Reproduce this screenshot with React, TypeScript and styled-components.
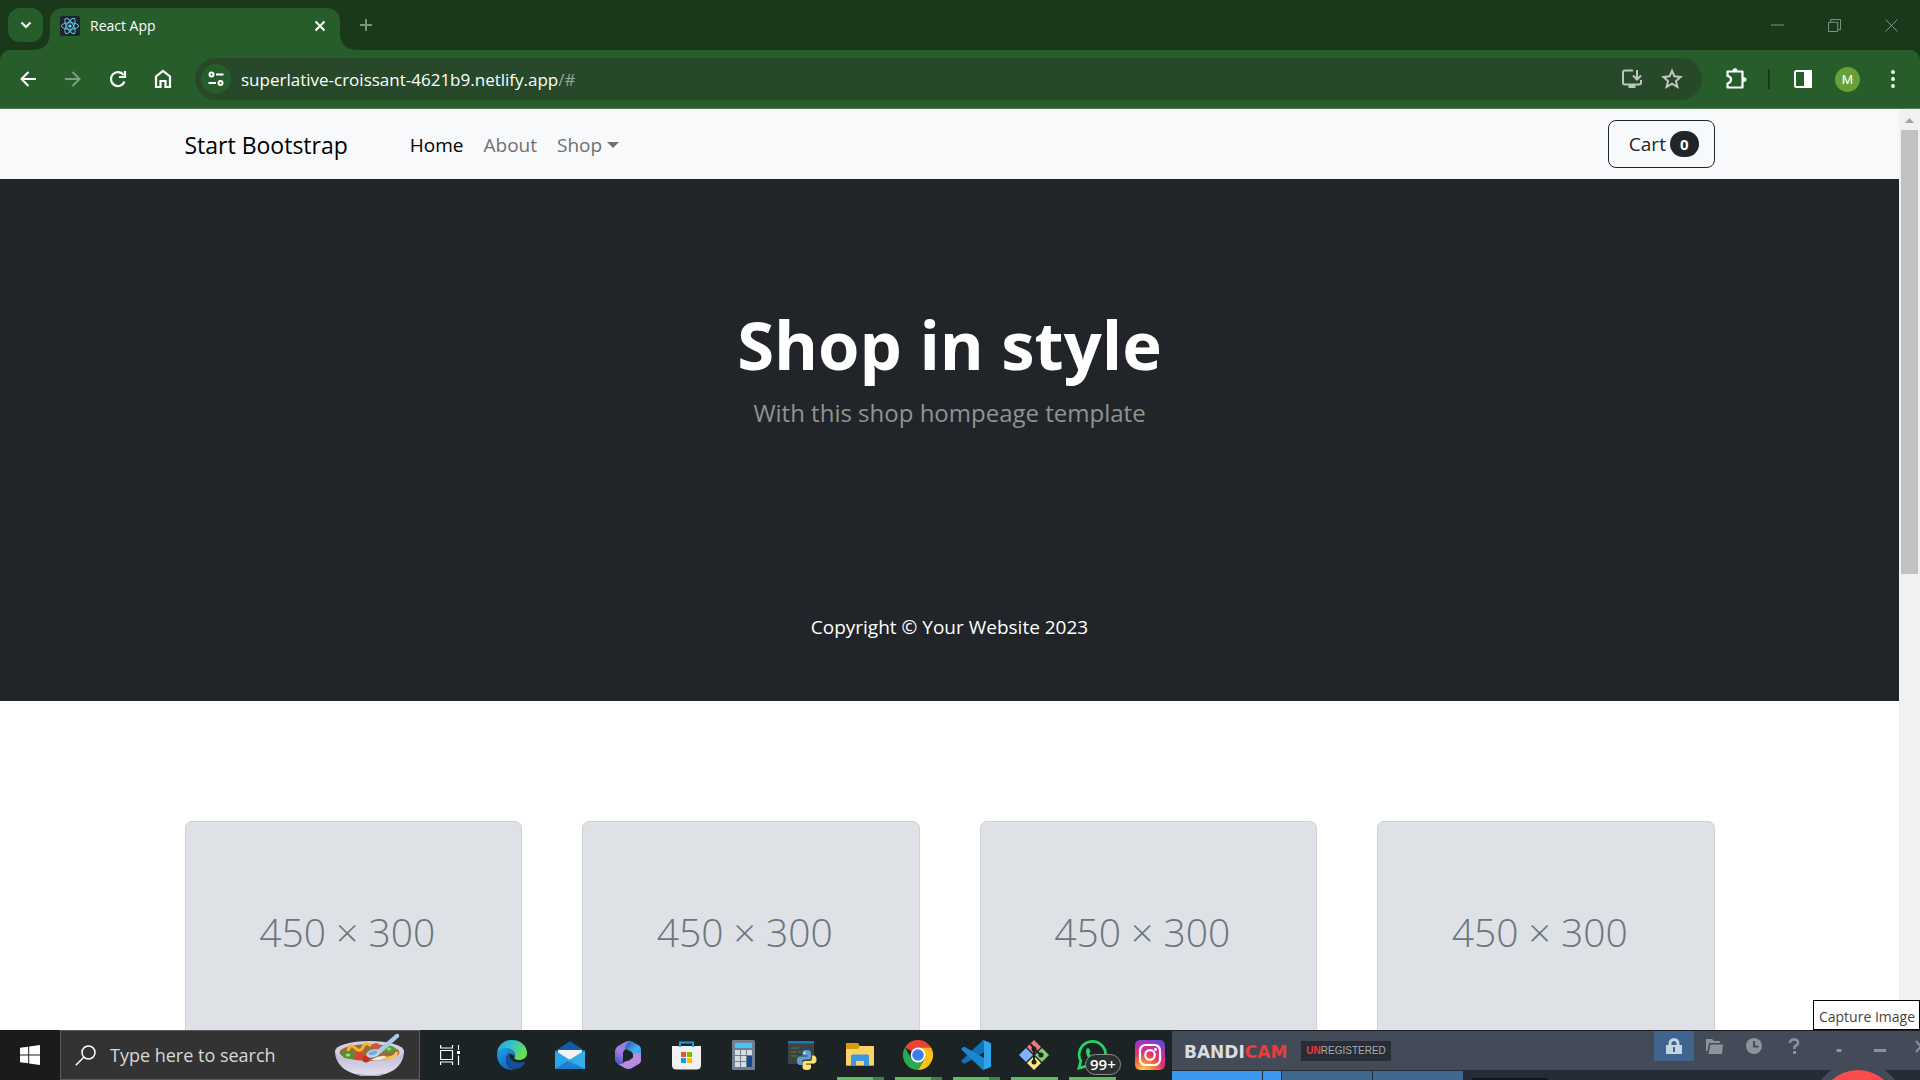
import React from "react";
import styled, { createGlobalStyle } from "styled-components";

const GlobalStyle = createGlobalStyle`
  *, *::before, *::after { box-sizing: border-box; }
  html, body, #root { height: 100%; }
  body { margin: 0; overflow: hidden; font-family: "Open Sans", "Noto Sans", sans-serif; }
  button, input { font: inherit; }
  button { padding: 0; border: 0; background: none; cursor: pointer; }
  a { color: inherit; text-decoration: none; }
  svg { display: block; flex: none; }
`;

const Desktop = styled.div`
  height: 100vh;
  display: flex;
  flex-direction: column;
  background: #fff;
`;

/* ---------- Browser chrome ---------- */

const TabStrip = styled.div`
  flex: none;
  height: 50px;
  display: flex;
  align-items: flex-end;
  background: #1a391b;
  color: #fff;
`;

const TabSearch = styled.button`
  width: 35px;
  height: 34px;
  margin: 0 7px 8px 8px;
  border-radius: 12px;
  background: #265d2b;
  display: grid;
  place-items: center;
`;

const Tab = styled.div`
  position: relative;
  width: 290px;
  height: 42px;
  padding: 0 10px 7px;
  display: flex;
  align-items: center;
  gap: 10px;
  border-radius: 13px 13px 0 0;
  background: #265d2b;
  font-size: 14px;
  line-height: 20px;

  &::before,
  &::after {
    content: "";
    position: absolute;
    bottom: 0;
    width: 14px;
    height: 14px;
  }
  &::before {
    right: 100%;
    background: radial-gradient(circle at 0 0, transparent 13px, #265d2b 14px);
  }
  &::after {
    left: 100%;
    background: radial-gradient(circle at 100% 0, transparent 13px, #265d2b 14px);
  }
`;

const TabTitle = styled.span`
  flex: 1;
`;

const IconButton = styled.button<{ $w?: number; $h?: number }>`
  flex: none;
  width: ${(p) => p.$w ?? 45}px;
  height: ${(p) => p.$h ?? 42}px;
  display: grid;
  place-items: center;
`;

const WindowControls = styled.div`
  margin-left: auto;
  display: flex;
`;

const ToolbarBack = styled.div`
  flex: none;
  background: #1a391b;
`;

const Toolbar = styled.div`
  height: 59px;
  padding: 0 5px;
  display: flex;
  align-items: center;
  border-bottom: 1px solid #4f7f53;
  border-radius: 10px 10px 0 0;
  background: #265d2b;
`;

const Omnibox = styled.form`
  flex: 1;
  height: 42px;
  margin: 0 11px 0 10px;
  padding: 0 10px 0 6px;
  display: flex;
  align-items: center;
  border-radius: 21px;
  background: #27492a;
  color: #fff;
  font-size: 17px;
`;

const SiteInfo = styled.button`
  width: 30px;
  height: 30px;
  margin-right: 10px;
  border-radius: 50%;
  background: #265d2b;
  display: grid;
  place-items: center;
`;

const UrlInput = styled.input`
  field-sizing: content;
  padding: 0;
  border: 0;
  outline: 0;
  background: none;
  color: #fff;
`;

const UrlRest = styled.span`
  flex: 1;
  color: #98a899;
`;

const ToolbarDivider = styled.span`
  width: 2px;
  height: 20px;
  margin: 0 10px;
  background: #1a391b;
`;

const Avatar = styled.span`
  width: 25px;
  height: 25px;
  border-radius: 50%;
  display: grid;
  place-items: center;
  background: #689f38;
  color: #fff;
  font: 13px/25px Roboto, sans-serif;
`;

/* ---------- Web page ---------- */

const Viewport = styled.div`
  flex: 1;
  min-height: 0;
  display: flex;
  position: relative;
`;

const Page = styled.div`
  flex: 1;
  overflow: hidden;
  background: #fff;
  color: #212529;
  font-size: 19px;
  line-height: 30px;
`;

const Container = styled.div`
  width: 100%;
  max-width: 1650px;
  margin: 0 auto;
  padding: 0 60px;
`;

const Navbar = styled.nav`
  padding: 10px 0;
  background: #f8f9fb;
`;

const NavRow = styled(Container)`
  height: 50px;
  display: flex;
  align-items: center;
`;

const Brand = styled.a`
  margin-right: 52px;
  padding-top: 2px;
  color: #000;
  font-size: 23px;
`;

const NavList = styled.ul`
  flex: 1;
  margin: 0;
  padding: 0;
  display: flex;
  list-style: none;
`;

const NavLink = styled.a<{ $active?: boolean }>`
  padding: 11px 10px 9px;
  display: flex;
  align-items: center;
  gap: 5px;
  color: ${(p) => (p.$active ? "#000" : "#6f7071")};
`;

const Caret = styled.span`
  border: 6px solid transparent;
  border-top-color: currentColor;
  border-bottom: 0;
`;

const CartButton = styled.button`
  height: 48px;
  padding: 0 15px 0 20px;
  display: flex;
  align-items: center;
  gap: 4px;
  border: 1px solid #212529;
  border-radius: 8px;
  color: #212529;
`;

const Badge = styled.span`
  padding: 0 10px;
  border-radius: 13px;
  background: #212529;
  color: #fff;
  font-size: 15px;
  font-weight: 700;
  line-height: 26px;
`;

const Hero = styled.header`
  padding: 123px 0 120px;
  background: #212529;
  text-align: center;
`;

const HeroTitle = styled.h1`
  margin: 0 0 8px;
  color: #fff;
  font-size: 67px;
  font-weight: 700;
  line-height: 84px;
`;

const Lead = styled.p`
  margin: 0;
  color: #909294;
  font-size: 24px;
  line-height: 38px;
`;

const Footer = styled.footer`
  padding: 60px 0 59px;
  background: #212529;
  color: #fff;
  text-align: center;

  p { margin: 0; }
`;

const Products = styled.section`
  padding: 120px 0;
`;

const ProductGrid = styled.div`
  display: grid;
  grid-template-columns: repeat(4, 1fr);
  gap: 60px;
`;

const Card = styled.article`
  border: 1px solid #cfd2d6;
  border-radius: 7px;
  overflow: hidden;
  background: #dee1e6;
`;

const CardImage = styled.div`
  aspect-ratio: 3 / 2;
  padding: 0 12px 4px 0;
  display: grid;
  place-items: center;
  color: #6c757d;
  font-size: 39px;
  font-weight: 300;
  line-height: 50px;
`;

const ScrollTrack = styled.div`
  flex: none;
  width: 21px;
  padding: 0 2px;
  display: flex;
  flex-direction: column;
  background: #f1f1f1;
`;

const ScrollThumb = styled.div`
  flex: 0 0 48.2%;
  background: #c1c1c1;
`;

const Tooltip = styled.div`
  position: absolute;
  right: 0;
  bottom: 0;
  height: 30px;
  padding: 2px 4px 0 5px;
  border: 1px solid #000;
  background: #fff;
  color: #444;
  font-size: 14px;
  line-height: 28px;
`;

/* ---------- Taskbar ---------- */

const Taskbar = styled.div`
  flex: none;
  height: 50px;
  display: flex;
  background: #1b2324;
`;

const StartButton = styled.button`
  width: 60px;
  background: #1b1b1b;
  display: grid;
  place-items: center;
`;

const SearchBox = styled.label`
  width: 360px;
  padding: 0 14px;
  display: flex;
  align-items: center;
  gap: 14px;
  border: 1px solid #5c5c5c;
  background: #333;
`;

const SearchInput = styled.input`
  flex: 1;
  min-width: 0;
  padding: 0;
  border: 0;
  outline: 0;
  background: none;
  color: #fff;
  font-size: 18px;

  &::placeholder { color: #d8d8d8; opacity: 1; }
`;

const TaskView = styled.button`
  width: 60px;
  margin-right: 3px;
  display: grid;
  place-items: center;
`;

const TaskButton = styled.button`
  position: relative;
  width: 58px;
  height: 50px;
  display: grid;
  place-items: center;
`;

const OpenMark = styled.span<{ $stacked: boolean }>`
  position: absolute;
  bottom: 0;
  left: 6px;
  right: 5px;
  height: 3px;
  background: ${(p) =>
    p.$stacked ? "linear-gradient(90deg, #64b967 36px, #44804a 36px)" : "#64b967"};
`;

const Unread = styled.span`
  position: absolute;
  top: 24px;
  left: 22px;
  height: 21px;
  padding: 0 4px;
  border: 1px solid #8b8f8f;
  border-radius: 11px;
  background: #2b3030;
  color: #fff;
  font-size: 15px;
  font-weight: 600;
  line-height: 19px;
`;

const Recorder = styled.div`
  flex: 1;
  display: flex;
  flex-direction: column;
  position: relative;
  overflow: hidden;
  margin-left: -7px;
  border-top: 1px solid #1c2026;
  background: #262c35;
`;

const RecorderBar = styled.div`
  height: 39px;
  padding-left: 12px;
  display: flex;
  align-items: center;
  background: #424b57;
`;

const RecorderLogo = styled.span`
  padding-top: 2px;
  font: bold 17px/20px "DejaVu Sans", sans-serif;
  color: #dcdde0;

  b { color: #ee3b3b; }
`;

const License = styled.span`
  margin-left: 14px;
  padding: 0 5px;
  background: #272d34;
  color: #a9adb1;
  font: 10px/20px "Liberation Sans", sans-serif;

  b { color: #ee3b3b; }
`;

const RecorderTools = styled.div`
  height: 39px;
  margin-left: auto;
  display: flex;
  align-items: flex-start;
`;

const Tool = styled.button<{ $on?: boolean; $w: number }>`
  width: ${(p) => p.$w}px;
  height: 30px;
  display: grid;
  place-items: center;
  overflow: hidden;
  background: ${(p) => (p.$on ? "#3f658e" : "none")};
`;

const Segments = styled.div`
  flex: 1;
  display: flex;
  gap: 1px;
  padding-top: 1px;
`;

const Segment = styled.span<{ $w: number; $on?: boolean }>`
  width: ${(p) => p.$w}px;
  background: ${(p) => (p.$on ? "#3b98f0" : "#40688f")};
`;

const Preview = styled.span`
  width: 76px;
  height: 2px;
  margin-left: 8px;
  align-self: flex-end;
  background: #11151d;
`;

const RecordDial = styled.svg`
  position: absolute;
  right: 12px;
  bottom: 0;
`;

/* ---------- Icons ---------- */

const Ico = ({ s = 20, vb = 24, children, ...rest }: any) => (
  <svg width={s} height={s} viewBox={`0 0 ${vb} ${vb}`} fill="none" aria-hidden="true" {...rest}>
    {children}
  </svg>
);

const ReactIcon = () => (
  <Ico s={20} vb={20}>
    <rect width="20" height="20" rx="2" fill="#20232a" />
    <g stroke="#5bc4e4" strokeWidth="1">
      <ellipse cx="10" cy="10" rx="8.6" ry="3.3" />
      <ellipse cx="10" cy="10" rx="8.6" ry="3.3" transform="rotate(60 10 10)" />
      <ellipse cx="10" cy="10" rx="8.6" ry="3.3" transform="rotate(120 10 10)" />
    </g>
    <circle cx="10" cy="10" r="1.6" fill="#61dafb" />
  </Ico>
);

const WindowsIcon = () => (
  <Ico s={20} vb={20} fill="#fff">
    <path d="M0 2.8 8.2 1.7V9.5H0zM9.2 1.5 20 0V9.5H9.2zM0 10.5H8.2V18.3L0 17.2zM9.2 10.5H20V20L9.2 18.5z" />
  </Ico>
);

const BowlIcon = () => (
  <svg width="70" height="44" viewBox="0 0 70 44" aria-hidden="true">
    <defs>
      <linearGradient id="bowl" x1="0" y1="0" x2="0" y2="1">
        <stop offset="0" stopColor="#b9b4d2" />
        <stop offset="1" stopColor="#e6e2f0" />
      </linearGradient>
    </defs>
    <path d="M0 18C0 33 14 43 35 43S69 33 69 18z" fill="url(#bowl)" />
    <path d="M21 40Q35 44 49 40L45 43H25z" fill="#b7b0cf" />
    <ellipse cx="34.5" cy="18" rx="34.5" ry="10" fill="#d3d0e6" />
    <ellipse cx="34.5" cy="19.5" rx="30" ry="8.5" fill="#9a6a3c" />
    <path d="M13 18Q15 10 20 15T28 14T36 13" stroke="#f5b427" strokeWidth="3" fill="none" />
    <ellipse cx="13" cy="22" rx="6" ry="3.5" fill="#3f9b2f" />
    <ellipse cx="54" cy="16" rx="6" ry="3.5" fill="#4aa32f" />
    <ellipse cx="13" cy="22" rx="2.5" ry="1.5" fill="#a8d56c" />
    <ellipse cx="54" cy="16" rx="2" ry="1.4" fill="#a8d56c" />
    <path d="M48 25Q60 26 62 19" stroke="#f3c553" strokeWidth="3" fill="none" />
    <circle cx="24" cy="23" r="4" fill="#e0402f" />
    <circle cx="31" cy="26" r="3.6" fill="#c92e25" />
    <circle cx="41" cy="13" r="3" fill="#df5137" />
    <path d="M36 27Q45 22 51 23Q48 29 36 27z" fill="#f5e6d6" />
    <path d="M40 19 61 1Q65 0 64 4L45 21z" fill="#a9c8ee" />
    <ellipse cx="38" cy="20.5" rx="7" ry="4" fill="#b9d4f2" transform="rotate(-15 38 20)" />
    <ellipse cx="38" cy="20" rx="4.5" ry="2" fill="#7ba7d9" transform="rotate(-15 38 20)" />
  </svg>
);

const EdgeIcon = () => (
  <Ico s={30} vb={30}>
    <defs>
      <linearGradient id="edgeTop" x1="0" y1="0" x2="1" y2="0.5">
        <stop offset="0" stopColor="#1f9fe0" />
        <stop offset="0.5" stopColor="#35c4c9" />
        <stop offset="1" stopColor="#66e04c" />
      </linearGradient>
      <linearGradient id="edgeLow" x1="0" y1="0" x2="0.6" y2="1">
        <stop offset="0" stopColor="#1ea4ea" />
        <stop offset="1" stopColor="#1263b8" />
      </linearGradient>
    </defs>
    <path d="M0 13C1 5 7 0 15 0C24 0 30 6 30 13C30 18 26 20 22 20C18 20 17 18.5 17.5 17.5C19 15.5 18 11 13 9C8 7.5 2 9 0 13z" fill="url(#edgeTop)" />
    <path d="M0 14C1 9 7 7 12 8.5C16 9.5 18.500 13 17.500 17C15 11.5 9 14 9 20C9 25 13 29 18 29.7C8 31.5 0 25 0 14z" fill="url(#edgeLow)" />
    <path d="M12.5 12.5C8 15 8 22 11.5 26C16 31 25 29.5 28 23C28.5 22 27.5 21.5 26.5 22C18 25 11 19 12.5 12.5z" fill="#134f9c" />
  </Ico>
);

const MailIcon = () => (
  <Ico s={30} vb={30}>
    <path d="M0 11 15 1 30 11V14H0z" fill="#0f5ba8" />
    <path d="M3 10H27V22H3z" fill="#f3f3f3" />
    <path d="M0 10.5 15 20 30 10.5V29H0z" fill="#29a7ea" />
    <path d="M30 10.5 0 29H30z" fill="#2f9fe6" />
    <path d="M15 19.5 0 29H30z" fill="#1b7fd0" />
    <path d="M30 10.5 12 21 30 29z" fill="#39b7ef" opacity=".6" />
  </Ico>
);

const M365Icon = () => (
  <Ico s={30} vb={30}>
    <defs>
      <linearGradient id="m365a" x1="0.6" y1="0" x2="0.2" y2="1">
        <stop offset="0" stopColor="#8f7be6" />
        <stop offset="0.5" stopColor="#a97be0" />
        <stop offset="1" stopColor="#3c56c4" />
      </linearGradient>
      <linearGradient id="m365b" x1="0" y1="0" x2="1" y2="1">
        <stop offset="0" stopColor="#2c4fae" />
        <stop offset="0.6" stopColor="#42b4f4" />
        <stop offset="1" stopColor="#3c8fe8" />
      </linearGradient>
    </defs>
    <path d="M15 1Q17 .5 19 1.500L26 5.500Q28 7 28 9.500V18L20 13.500 14 10Q11 5 15 1z" fill="url(#m365b)" />
    <path d="M17 1Q15 .5 12 2L5 6Q2 8 2 11V20Q2 22.500 5 24Q8 25 10 22V13.500Q10 10.500 13 9Q11.500 4 17 1z" fill="url(#m365a)" />
    <path d="M28 13V20Q28 23 25 24.500L18 28.500Q15 29.700 12 28.200L5 24Q9 24.500 12 21.500L16 20.500 20 17.500V13.500z" fill="#b98be0" />
    <path d="M15 10 19 12.300V17.700L15 20 11 17.700V12.300z" fill="#1b2324" />
  </Ico>
);

const StoreIcon = () => (
  <Ico s={30} vb={30}>
    <path d="M1 6H30V25Q30 29.5 25.5 29.5H5.5Q1 29.5 1 25z" fill="#f1f1f1" />
    <path d="M9 7V2.500H22V7" stroke="#1c9ade" strokeWidth="2" />
    <path d="M10 12h5v5h-5z" fill="#f25022" />
    <path d="M16 12h5v5h-5z" fill="#7fba00" />
    <path d="M10 18h5v5h-5z" fill="#00a4ef" />
    <path d="M16 18h5v5h-5z" fill="#ffb900" />
  </Ico>
);

const CalculatorIcon = () => (
  <Ico s={30} vb={30}>
    <rect x="3" width="23" height="30" rx="1.5" fill="#70808e" />
    <rect x="6" y="3" width="17" height="5" fill="#49c5f5" />
    <path d="M6 10h5v5h-5zM12 10h5v5h-5zM18 10h5v5h-5zM6 16h5v5h-5zM12 16h5v5h-5zM6 22h5v5h-5zM12 22h5v5h-5z" fill="#d5dce2" />
    <path d="M18 16h5v11h-5z" fill="#154a93" />
  </Ico>
);

const IdleIcon = () => (
  <Ico s={30} vb={30}>
    <path d="M1 1h26v23H1z" fill="#3e4244" />
    <path d="M1 1h26v2.5H1z" fill="#1b78c0" />
    <path d="M4 8h8M4 12h5M11 12h3M4 16h6" stroke="#3b8c3b" />
    <path d="M19.5 10c-4 0-4 1.5-4 3.5v2h5v1h-7c-3 0-3.5 2-3.5 4.5s1 4 3 4h2v-3q0-2.5 2.5-2.5h4.5q2 0 2-2v-4c0-2.5-1.5-3.5-4.5-3.5z" fill="#5a9fd4" />
    <path d="M19.5 30c4 0 4.5-1.5 4.5-3.5v-2h-5v-1h7c3 0 3.5-2 3.5-4s-1-4-3-4H25v3q0 2.5-2.500 2.500H18q-2.500 0-2.500 2.500v3c0 2.500 1 3.500 4 3.500z" fill="#ffe36b" />
    <circle cx="17.5" cy="13" r="1" fill="#fff" />
  </Ico>
);

const ExplorerIcon = () => (
  <Ico s={30} vb={30}>
    <path d="M1 4q0-1 1-1h11l2 3H28q1 0 1 1v19H1z" fill="#d99b0c" />
    <path d="M1 9h12l2-3h13q1 0 1 1v17q0 1-1 1H2q-1 0-1-1z" fill="#fbd366" />
    <path d="M6 26V16q0-1.5 1.5-1.5h15Q24 14.5 24 16v10h-5v-5h-8v5z" fill="#3b97de" />
  </Ico>
);

const ChromeIcon = () => (
  <Ico s={30} vb={30}>
    <path d="M15 15 2 7.5A15 15 0 0 1 28 7.5H15z" fill="#ea4335" />
    <path d="M28 7.5A15 15 0 0 1 15 30L21.5 18.7 15 7.5z" fill="#fbc116" />
    <path d="M2 7.5A15 15 0 0 0 15 30L21.5 18.7 8.5 18.7z" fill="#2da94f" />
    <circle cx="15" cy="15" r="7.4" fill="#fff" />
    <circle cx="15" cy="15" r="5.8" fill="#3b7ded" />
  </Ico>
);

const CodeIcon = () => (
  <Ico s={30} vb={30}>
    <path d="M22 0 30 3V8L4 23.5Q3 24 2.3 23.3L.5 21.5Q0 20.7 1 20z" fill="#1070b8" />
    <path d="M22 30 30 27V22L4 7Q3 6.5 2.3 7L.5 8.7Q0 9.5 1 10.2z" fill="#1787d0" />
    <path d="M22 0 29 3Q30 3.5 30 4.5V25.5Q30 26.5 29 27L22 30Q23 29.5 23 27.5V2.5Q23 .5 22 0z" fill="#30a5ee" />
  </Ico>
);

const GitIcon = () => (
  <Ico s={30} vb={30}>
    <path d="M15 0 22 7 15 14 8 7z" fill="#f0787a" />
    <path d="M7 8 14 15 7 22 0 15z" fill="#80b3ff" />
    <path d="M23 8 30 15 23 22 16 15z" fill="#80cf6a" />
    <path d="M15 16 22 23 15 30 8 23z" fill="#ffe680" />
    <path d="M11.5 4 15 8V22M15 9 22 15" stroke="#1b2324" strokeWidth="2" />
    <circle cx="15" cy="9" r="2.5" fill="#1b2324" />
    <circle cx="22" cy="15" r="2.5" fill="#1b2324" />
    <circle cx="15" cy="22" r="2.5" fill="#1b2324" />
  </Ico>
);

const WhatsAppIcon = () => (
  <Ico s={30} vb={30}>
    <path d="M2 28 3.8 21A13.2 13.2 0 1 1 9 26.2z" stroke="#25d366" strokeWidth="2.8" />
    <path d="M10 8.5q1-1 2 0l1.5 3-1.2 2q1.500 3 4.500 4.200l2-1.500 3 1.500q.5 3-3.800 4-8-2-9-9.500-.2-2.700 1-3.700z" fill="#25d366" />
  </Ico>
);

const InstagramIcon = () => (
  <Ico s={30} vb={30}>
    <defs>
      <radialGradient id="insta" cx="0.3" cy="1.05" r="1.15">
        <stop offset="0" stopColor="#fedc6a" />
        <stop offset="0.3" stopColor="#fa7e33" />
        <stop offset="0.55" stopColor="#e3336c" />
        <stop offset="0.8" stopColor="#b432b4" />
        <stop offset="1" stopColor="#5b4bd8" />
      </radialGradient>
    </defs>
    <rect width="30" height="30" rx="5" fill="url(#insta)" />
    <rect x="5" y="5" width="20" height="20" rx="5.5" stroke="#fff" strokeWidth="2.2" />
    <circle cx="15" cy="15" r="4.8" stroke="#fff" strokeWidth="2.2" />
    <circle cx="20.5" cy="9.5" r="1.4" fill="#fff" />
  </Ico>
);

const tasks: { name: string; Icon: () => React.ReactElement; open?: boolean; stacked?: boolean; badge?: string }[] = [
  { name: "Microsoft Edge", Icon: EdgeIcon },
  { name: "Mail", Icon: MailIcon },
  { name: "Microsoft 365", Icon: M365Icon },
  { name: "Microsoft Store", Icon: StoreIcon },
  { name: "Calculator", Icon: CalculatorIcon },
  { name: "IDLE", Icon: IdleIcon },
  { name: "File Explorer", Icon: ExplorerIcon, open: true, stacked: true },
  { name: "Google Chrome", Icon: ChromeIcon, open: true, stacked: true },
  { name: "Visual Studio Code", Icon: CodeIcon, open: true, stacked: true },
  { name: "Git", Icon: GitIcon, open: true },
  { name: "WhatsApp", Icon: WhatsAppIcon, open: true, badge: "99+" },
  { name: "Instagram", Icon: InstagramIcon },
];

const BrowserChrome = () => (
  <>
    <TabStrip>
      <TabSearch aria-label="Search tabs">
        <Ico s={12} vb={12} stroke="#fff" strokeWidth="2.2"><path d="M1.5 3.5 6 8 10.5 3.5" /></Ico>
      </TabSearch>
      <Tab>
        <ReactIcon />
        <TabTitle>React App</TabTitle>
        <IconButton $w={20} $h={20} aria-label="Close tab">
          <Ico s={12} vb={12} stroke="#fff" strokeWidth="2"><path d="M1.5 1.5 10.5 10.5M10.5 1.5 1.5 10.5" /></Ico>
        </IconButton>
      </Tab>
      <IconButton $w={51} $h={50} aria-label="New tab">
        <Ico s={14} vb={14} stroke="#7c927d" strokeWidth="2"><path d="M7 1V13M1 7H13" /></Ico>
      </IconButton>
      <WindowControls>
        <IconButton $w={57} $h={50} aria-label="Minimize">
          <Ico s={13} vb={14} stroke="#8a9c8b"><path d="M0 6.5H14" /></Ico>
        </IconButton>
        <IconButton $w={57} $h={50} aria-label="Restore">
          <Ico s={13} vb={14} stroke="#8a9c8b"><path d="M.5 3.5H10.5V13.5H.5zM3 3V.5H13.5V11.5H11" /></Ico>
        </IconButton>
        <IconButton $w={57} $h={50} aria-label="Close">
          <Ico s={13} vb={14} stroke="#8a9c8b"><path d="M.5.5 13.5 13.5M13.5.5.5 13.5" /></Ico>
        </IconButton>
      </WindowControls>
    </TabStrip>
    <ToolbarBack>
      <Toolbar>
        <IconButton aria-label="Back">
          <Ico s={16} vb={16} stroke="#fff" strokeWidth="2"><path d="M16 8H2M8.5 1 1.5 8 8.5 15" /></Ico>
        </IconButton>
        <IconButton aria-label="Forward">
          <Ico s={16} vb={16} stroke="#7f9f82" strokeWidth="2"><path d="M0 8H14M7.5 1 14.5 8 7.5 15" /></Ico>
        </IconButton>
        <IconButton aria-label="Reload">
          <Ico s={18} vb={18} stroke="#fff" strokeWidth="2.2"><path d="M15.5 11.5A7 7 0 1 1 14.5 4.8M16 1V7H10" /></Ico>
        </IconButton>
        <IconButton aria-label="Home">
          <Ico s={20} vb={20} stroke="#fff" strokeWidth="2.2"><path d="M3 7.5 10 2 17 7.5V18H12.5V12H7.5V18H3z" /></Ico>
        </IconButton>
        <Omnibox onSubmit={(e) => e.preventDefault()}>
          <SiteInfo type="button" aria-label="Site information">
            <Ico s={16} vb={16} stroke="#fff" strokeWidth="2">
              <circle cx="3.5" cy="3.5" r="2" /><path d="M8 3.5H15.5M.5 12H8" /><circle cx="12.5" cy="12" r="2" />
            </Ico>
          </SiteInfo>
          <UrlInput aria-label="Address" defaultValue="superlative-croissant-4621b9.netlify.app" />
          <UrlRest>/#</UrlRest>
          <IconButton $w={40} type="button" aria-label="Install app">
            <Ico s={22} vb={22} stroke="#bfc5c0" strokeWidth="2">
              <path d="M12 2.5H4Q2 2.5 2 4.5V14.5Q2 16.5 4 16.5H18Q20 16.5 20 14.5V12M16 2V11M12 7.5 16 11.5 20 7.5" /><path d="M7.5 18.5H14.5" strokeWidth="3" />
            </Ico>
          </IconButton>
          <IconButton $w={40} type="button" aria-label="Bookmark this tab">
            <Ico s={22} vb={20} stroke="#c3c8c3" strokeWidth="1.8">
              <path d="M10 2.5 12.2 7.6 17.8 8.1 13.6 11.8 14.9 17.3 10 14.3 5.1 17.3 6.4 11.8 2.2 8.1 7.8 7.6z" />
            </Ico>
          </IconButton>
        </Omnibox>
        <IconButton aria-label="Extensions">
          <Ico s={22} vb={22} stroke="#fff" strokeWidth="2.2">
            <path d="M2.500 3.500H17.500V19.500H2.500V15.500Q6 14.500 6 11.500T2.500 8z" strokeLinejoin="round" />
            <path d="M7.500 3Q7.500 .3 10 .3T12.500 3zM18 9Q21.500 9 21.500 11.500T18 14z" fill="#fff" stroke="none" />
          </Ico>
        </IconButton>
        <ToolbarDivider />
        <IconButton aria-label="Side panel">
          <Ico s={18} vb={18} stroke="#fff" strokeWidth="2"><rect x="1" y="1" width="16" height="16" rx="1.5" /><path d="M11 1H17V17H11z" fill="#fff" /></Ico>
        </IconButton>
        <IconButton aria-label="Profile"><Avatar>M</Avatar></IconButton>
        <IconButton aria-label="Menu">
          <Ico s={18} vb={18} fill="#fff"><circle cx="9" cy="2" r="1.9" /><circle cx="9" cy="9" r="1.9" /><circle cx="9" cy="16" r="1.9" /></Ico>
        </IconButton>
      </Toolbar>
    </ToolbarBack>
  </>
);

const ShopPage = () => (
  <Page>
    <Navbar>
      <NavRow>
        <Brand href="#">Start Bootstrap</Brand>
        <NavList>
          <li><NavLink href="#" $active>Home</NavLink></li>
          <li><NavLink href="#">About</NavLink></li>
          <li><NavLink href="#">Shop<Caret /></NavLink></li>
        </NavList>
        <CartButton>Cart<Badge>0</Badge></CartButton>
      </NavRow>
    </Navbar>
    <Hero>
      <HeroTitle>Shop in style</HeroTitle>
      <Lead>With this shop hompeage template</Lead>
    </Hero>
    <Footer><p>Copyright © Your Website 2023</p></Footer>
    <Products>
      <Container>
        <ProductGrid>
          {[1, 2, 3, 4].map((id) => (
            <Card key={id}><CardImage>450 × 300</CardImage></Card>
          ))}
        </ProductGrid>
      </Container>
    </Products>
  </Page>
);

const RecorderWindow = () => (
  <Recorder>
    <RecorderBar>
      <RecorderLogo>BANDI<b>CAM</b></RecorderLogo>
      <License><b>UN</b>REGISTERED</License>
      <RecorderTools>
        <Tool $w={40} $on aria-label="Lock">
          <Ico s={16} vb={16} fill="#c5d3e3"><path d="M0 7H2.5V5.5A5.5 5.5 0 0 1 13.5 5.5V7H16V16H0zM5.5 7H10.5V5.5A2.5 2.5 0 0 0 5.5 5.5zM7 9V14H9V9z" fillRule="evenodd" /></Ico>
        </Tool>
        <Tool $w={40} aria-label="Open folder">
          <Ico s={17} vb={17} fill="#8d939b"><path d="M0 1H6L8 3H14V5H3L1.5 13H0z" /><path d="M4.5 6.5H17L16 16H2.5z" /></Ico>
        </Tool>
        <Tool $w={40} aria-label="Timer">
          <Ico s={16} vb={16}><circle cx="8" cy="8" r="8" fill="#8d939b" /><path d="M8 3V8.5H12.5" stroke="#424b57" strokeWidth="2" /></Ico>
        </Tool>
        <Tool $w={40} aria-label="Help">
          <Ico s={16} vb={16}><path d="M4 5Q4 1.5 8 1.5T12 5Q12 7 8.5 8.5V11" stroke="#8d939b" strokeWidth="2.5" /><path d="M7 13H10V16H7z" fill="#8d939b" /></Ico>
        </Tool>
        <Tool $w={50} aria-label="Compact">
          <Ico s={16} vb={16}><path d="M5.5 12.5H10.5" stroke="#8d939b" strokeWidth="3" /></Ico>
        </Tool>
        <Tool $w={32} aria-label="Minimize recorder">
          <Ico s={16} vb={16}><path d="M2 12.5H14" stroke="#8d939b" strokeWidth="3" /></Ico>
        </Tool>
        <Tool $w={24} aria-label="Close recorder">
          <Ico s={14} vb={14} style={{ justifySelf: "end" }}><path d="M10 2 15 7.500 10 13" stroke="#8d939b" strokeWidth="2" /></Ico>
        </Tool>
      </RecorderTools>
    </RecorderBar>
    <Segments>
      <Segment $w={90} $on /><Segment $w={18} $on /><Segment $w={90} /><Segment $w={90} /><Preview />
    </Segments>
    <RecordDial width="100" height="18" viewBox="0 0 100 18" aria-hidden="true">
      <circle cx="50" cy="47" r="47" fill="#424b57" />
      <circle cx="50" cy="47" r="39" fill="#fb4b4b" />
    </RecordDial>
  </Recorder>
);

export default function App() {
  return (
    <Desktop>
      <GlobalStyle />
      <BrowserChrome />
      <Viewport>
        <ShopPage />
        <ScrollTrack aria-hidden="true">
          <Ico s={17} vb={17} style={{ marginTop: 4 }}><path d="M4 10 8.5 5 13 10z" fill="#a3a3a3" /></Ico>
          <ScrollThumb />
        </ScrollTrack>
        <Tooltip role="tooltip">Capture Image</Tooltip>
      </Viewport>
      <Taskbar>
        <StartButton aria-label="Start"><WindowsIcon /></StartButton>
        <SearchBox>
          <Ico s={21} vb={21} stroke="#fff" strokeWidth="1.5"><circle cx="13.5" cy="7.5" r="6.5" /><path d="M9 12 .8 20.2" /></Ico>
          <SearchInput aria-label="Search" placeholder="Type here to search" />
          <BowlIcon />
        </SearchBox>
        <TaskView aria-label="Task view">
          <Ico s={20} vb={20} stroke="#fff" strokeWidth="1.2">
            <path d="M.6 5.5H12.5V14.5H.6zM.6 0V3H12.5V0M.6 20V17H12.5V20M18.500 0V5M18.500 10.500V20" /><path d="M17 6h3v3h-3z" fill="#fff" stroke="none" />
          </Ico>
        </TaskView>
        {tasks.map(({ name, Icon, open, stacked, badge }) => (
          <TaskButton key={name} aria-label={name}>
            <Icon />
            {badge && <Unread>{badge}</Unread>}
            {open && <OpenMark $stacked={!!stacked} />}
          </TaskButton>
        ))}
        <RecorderWindow />
      </Taskbar>
    </Desktop>
  );
}
